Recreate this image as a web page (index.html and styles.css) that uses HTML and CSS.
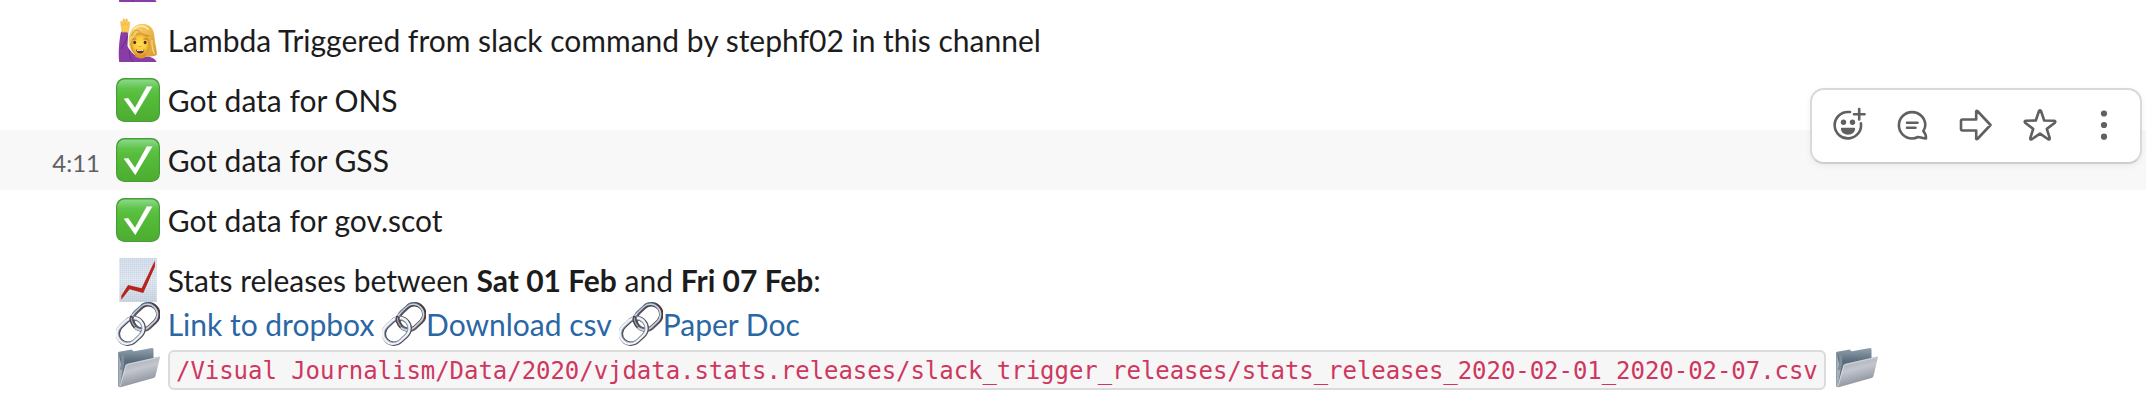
FILE: index.html
```html
<!DOCTYPE html>
<html lang="en">
<head>
<meta charset="utf-8">
<title>Channel messages</title>
<link rel="stylesheet" href="styles.css">
</head>
<body>
<svg class="defs" aria-hidden="true">
  <defs>
    <linearGradient id="green" x1="0" y1="0" x2="0" y2="1"><stop offset="0" stop-color="#8bd98a"/><stop offset=".22" stop-color="#5fc349"/><stop offset=".4" stop-color="#55bd3a"/><stop offset="1" stop-color="#4dac31"/></linearGradient>
    <linearGradient id="hair" x1="0" y1="0" x2="1" y2="1"><stop offset="0" stop-color="#f9dc83"/><stop offset=".5" stop-color="#f0be50"/><stop offset="1" stop-color="#d59a35"/></linearGradient>
    <radialGradient id="face"><stop offset="0" stop-color="#ffe05a"/><stop offset=".65" stop-color="#fbc83c"/><stop offset="1" stop-color="#d98f25"/></radialGradient>
    <linearGradient id="paper" x1="0" y1="0" x2="0" y2="1"><stop offset="0" stop-color="#dbe4ee"/><stop offset=".5" stop-color="#e8eef6"/><stop offset="1" stop-color="#d0d7e2"/></linearGradient>
    <pattern id="grid" width="2" height="2" patternUnits="userSpaceOnUse"><path d="M0 .5H2M.5 0V2" stroke="#b5c5d6" stroke-width=".3"/></pattern>
    <linearGradient id="dark-metal" x1="0" y1="0" x2="1" y2="0"><stop offset="0" stop-color="#66626a"/><stop offset="1" stop-color="#493b3b"/></linearGradient>
    <linearGradient id="back" x1="0" y1="0" x2="0" y2="1"><stop offset="0" stop-color="#91a1af"/><stop offset=".35" stop-color="#586979"/><stop offset="1" stop-color="#738291"/></linearGradient>
    <linearGradient id="front" x1="0" y1="0" x2=".35" y2="1"><stop offset="0" stop-color="#9da1ab"/><stop offset=".5" stop-color="#c3c6cf"/><stop offset="1" stop-color="#888d98"/></linearGradient>
  </defs>
  <symbol id="check" viewBox="0 0 44 44">
    <rect width="44" height="44" rx="8.5" fill="#479e35"/>
    <rect x="1.2" y="1.6" width="41.6" height="41.4" rx="7.5" fill="url(#green)"/>
    <path d="M7.5 20.6l4.8-.7 6.7 9.7L30.7 8.3h6L19.3 37.3z" fill="#fff" stroke="#449331" stroke-opacity=".35" stroke-width=".5"/>
  </symbol>
  <symbol id="woman" viewBox="0 0 44 44">
    <path d="M13 27C11 13 18 6 26.500 6c8 0 11.500 5 12 13 .3 7 2.500 11 2.300 18-4 2-10 2-14 1l-11-4z" fill="url(#hair)"/>
    <path d="M3.200 44C2 34 3.500 20 5 14c2.500-1.800 5.500-1.400 7.200.5L11.500 28c3 6 8 11 14.500 11.500 6-1.500 12-.5 14.700 4.500z" fill="#873da5"/>
    <path d="M5 31c2-4 5-7 6.400-13M13.500 32c-.5 5 1 9 4 12" fill="none" stroke="#69258c" stroke-width=".9"/>
    <path d="M19 35h11v3.500q-4 4-11 0z" fill="#d9952a"/>
    <ellipse cx="24.200" cy="26.300" rx="9.700" ry="11.800" fill="url(#face)"/>
    <path d="M13.500 27C11.500 14 18 6 26.500 6c7 0 10.500 5 11.500 13 .6 5-1 10-4 13 1-5 1-10-.8-14-5-.5-9.200-2-11.700-5-1 5-6 8-8 14z" fill="url(#hair)"/>
    <path d="M15.500 18C17.500 13 20 11.500 22 12.500c3 3.500 7.500 5 11.500 5.500" fill="none" stroke="#b87a24" stroke-width=".7"/>
    <path d="M18 11c5-4.500 11-3.500 14.500.5" fill="none" stroke="#fdeab0" stroke-width="1.500"/>
    <path d="M36 22q-.5 8 2.500 14" fill="none" stroke="#f8d982" stroke-width="1.200"/>
    <path d="M16.500 21.500q2-1.400 3.800-.3M27.500 21.200q2-1 3.800.4" fill="none" stroke="#a56518" stroke-width=".9"/>
    <ellipse cx="18.700" cy="24.500" rx="1.400" ry="1.800" fill="#493019"/><ellipse cx="29.100" cy="24.500" rx="1.400" ry="1.800" fill="#493019"/>
    <path d="M22.500 28.300q1.500.8 3 0" fill="none" stroke="#d48c22" stroke-width=".7"/>
    <path d="M19.800 31.500q4.300 1 8.700 0-.8 4-4.300 4t-4.400-4z" fill="#663018"/>
    <path d="M21 32q3.300.7 6.500 0v.9H21z" fill="#fff"/>
    <path d="M6.600 14.500C5.400 11 4.800 6.500 4.700 3.500q1-1.300 1.500.2l1.100 3.600L7 1.200q1-1 1.600.1l.8 5.400.4-5.500q1-1 1.500.2l.2 5.800 1-3.400q1.200-.5 1.200.9C13.700 8 13 11.500 12 14.800q-2.700-1.500-5.400-.3z" fill="#fcc94a" stroke="#e3a231" stroke-width=".4"/>
  </symbol>
  <symbol id="chart" viewBox="0 0 44 44">
    <path d="M3.300 0h37.500v44H3.300z" fill="url(#paper)"/><path d="M3.300 0h37.500v44H3.300z" fill="url(#grid)"/>
    <path d="M5.300 41.800v-4L12.100 27l13.500 3.200L38.900 2.500v6.200L27.300 35 13.600 31.200z" fill="#b5251d"/>
  </symbol>
  <symbol id="link" viewBox="0 0 44 44">
    <g fill="none" transform="rotate(-43 22 22)">
      <g><rect x="18.200" y="12" width="28" height="20" rx="10" stroke="url(#dark-metal)" stroke-width="4.400"/><rect x="17.200" y="11.200" width="28.300" height="20.300" rx="10" stroke="#c4d3e3" stroke-width="1.700"/><path d="M25 10.600h11q9.800 0 10.300 9" stroke="#547eae" stroke-width=".8"/></g>
      <rect x="-2" y="12.200" width="28" height="20" rx="10" stroke="#554f54" stroke-width="4.400"/><rect x="-2.500" y="11.500" width="28.200" height="20.200" rx="10" stroke="#f0f3f7" stroke-width="2.900"/><rect x="-1.300" y="12.800" width="25.700" height="18" rx="9" stroke="#7397bb" stroke-width=".7"/>
      <path d="M23 12.300q-4.800 2-4.800 10" stroke="#494249" stroke-width="4"/><path d="M21.700 12.800q-3.500 3-3.500 9" stroke="#9ba4b1" stroke-width="1.300"/>
    </g>
  </symbol>
  <symbol id="folder" viewBox="0 0 44 44">
    <path d="M2 7q0-1 1-1.200L15.500 3.400q1 0 1.500 1.700l1 .2 18-3.200q1.500 0 1.500 1.400V28L3.500 41Q2 41 2 39z" fill="url(#back)"/>
    <path d="M2.300 7v32l1.300 2.200 3-18" fill="#a5b0ba"/>
    <path d="M5.200 24l1.500-6v-9" fill="none" stroke="#7f8d9a" stroke-width="3"/>
    <path d="M9.200 20q.3-1.700 2-2.200L43 10.600q1.200-.2.900 1L39.500 30q-.4 1.500-2 2L4.500 41.200q-1.300.3-1-1z" fill="url(#front)"/>
    <path d="M4 40.600L9.800 20q.3-1.200 1.700-1.500L43 11.400" fill="none" stroke="#dde1e6" stroke-width=".7"/>
  </symbol>
</svg>

<main class="messages">
  <div class="message"><svg class="emoji"><use href="#woman"/></svg></div>
  <div class="message"><svg class="emoji"><use href="#woman"/></svg> Lambda Triggered from slack command by stephf02 in this channel</div>
  <div class="message"><svg class="emoji"><use href="#check"/></svg> Got data for ONS</div>
  <div class="message message-hover">
    <time class="time">4:11</time>
    <svg class="emoji"><use href="#check"/></svg> Got data for GSS
    <div class="toolbar">
      <button class="tool" aria-label="Add reaction"><svg class="icon" viewBox="0 0 36 36"><path d="M20 5h-2a13.200 13.200 0 1 0 12.900 11.200M29.200 2v10.500M24 7.200h10.500"/><g class="solid"><circle cx="13.500" cy="15.300" r="2.700"/><circle cx="22.500" cy="15.300" r="2.700"/><path d="M12 20.700h12q1.200 0 1.100 1.300c-.5 3.600-3.400 5.700-7.100 5.700s-6.600-2.100-7.100-5.700q-.1-1.300 1.100-1.300z"/></g></svg></button>
      <button class="tool" aria-label="Start a thread"><svg class="icon" viewBox="0 0 36 36"><path d="M29.300 24.200C30.900 21.500 31.300 19.800 31.300 18A13.200 13.200 0 1 0 18 31.500c2.300 0 3.800-.4 6-1.500 2.500.1 4.700 1.200 8 1.500.2-3.500-.6-5.200-2.700-7.300zM13 15.800h10.500M13 20.800h8.500"/></svg></button>
      <button class="tool" aria-label="Share message"><svg class="icon" viewBox="0 0 36 36"><path d="M4.500 12.500h13.700V4.200q.3-.8 1.200-.2L32.500 18 19.400 32q-.9.600-1.200-.2v-8.300H4.500q-1.500 0-1.500-1.500v-8q0-1.500 1.500-1.500z"/></svg></button>
      <button class="tool" aria-label="Save message"><svg class="icon" viewBox="0 0 36 36"><path d="M17 4q1-1.200 2 0l3.200 9.500 10 .3q1.700.5.7 1.900l-8.100 6.200 3 9.400q0 1.600-1.600 1L18 26.600l-8.200 5.700q-1.600.6-1.600-1l3-9.400-8.100-6.200q-1-1.400.7-1.900l10-.3z"/></svg></button>
      <button class="tool" aria-label="More actions"><svg class="icon" viewBox="0 0 36 36"><g class="solid"><circle cx="18" cy="6.500" r="3.100"/><circle cx="18" cy="18" r="3.100"/><circle cx="18" cy="29.700" r="3.100"/></g></svg></button>
    </div>
  </div>
  <div class="message"><svg class="emoji"><use href="#check"/></svg> Got data for gov.scot</div>
  <div class="message">
    <div><svg class="emoji"><use href="#chart"/></svg> Stats releases between <b>Sat 01 Feb</b> and <b>Fri 07 Feb</b>:</div>
    <div><svg class="emoji"><use href="#link"/></svg> <a class="anchor">Link to dropbox</a> <svg class="emoji"><use href="#link"/></svg><a class="anchor">Download csv</a> <svg class="emoji"><use href="#link"/></svg><a class="anchor">Paper Doc</a></div>
    <div class="file-line"><svg class="emoji"><use href="#folder"/></svg><code class="path">/Visual Journalism/Data/2020/vjdata.stats.releases/slack_trigger_releases/stats_releases_2020-02-01_2020-02-07.csv</code><svg class="emoji"><use href="#folder"/></svg></div>
  </div>
</main>
</body>
</html>
```
FILE: styles.css
```css
* { box-sizing: border-box; }
body {
  margin: 0;
  height: 412px;
  overflow: hidden;
  background: #fff;
  color: #1d1c1d;
  font: 30px/44px Lato, "Liberation Sans", sans-serif;
  font-variant-ligatures: none;
}
.defs { position: absolute; width: 0; height: 0; }
.messages { margin-top: -50px; }
.message {
  position: relative;
  min-height: 60px;
  padding: 8px 16px 8px 116px;
  white-space: nowrap;
}
.message-hover { background: #f8f8f8; }
.emoji { display: inline-block; width: 44px; height: 44px; vertical-align: top; overflow: hidden; }
.time {
  position: absolute;
  top: 11px;
  left: 0;
  width: 100px;
  text-align: right;
  font-size: 24px;
  color: #616061;
}
.toolbar {
  position: absolute;
  top: -42px;
  right: 4px;
  display: flex;
  align-items: center;
  width: 332px;
  height: 76px;
  padding: 0 4px 1.5px;
  border: 2px solid #d9d9d9;
  border-bottom-color: #cecece;
  border-radius: 14px;
  background: #fff;
  box-shadow: 0 2px 6px rgba(0, 0, 0, .06);
}
.tool { display: flex; flex: none; justify-content: center; width: 64px; padding: 0; border: 0; background: none; }
.icon { width: 36px; height: 36px; fill: none; stroke: #616061; stroke-width: 2.600; stroke-linecap: round; stroke-linejoin: round; }
.solid { fill: #616061; stroke: none; }
.anchor { color: #2b67a4; }
.file-line { display: flex; gap: 8px; }
.path {
  width: 1658px;
  height: 40px;
  margin-top: 4px;
  padding: 0 6px;
  border: 2px solid #dbdbdb;
  border-radius: 6px;
  background: #f6f6f6;
  color: #cf375f;
  font: 24px/39px "DejaVu Sans Mono", monospace;
  letter-spacing: -.048px;
}
```
